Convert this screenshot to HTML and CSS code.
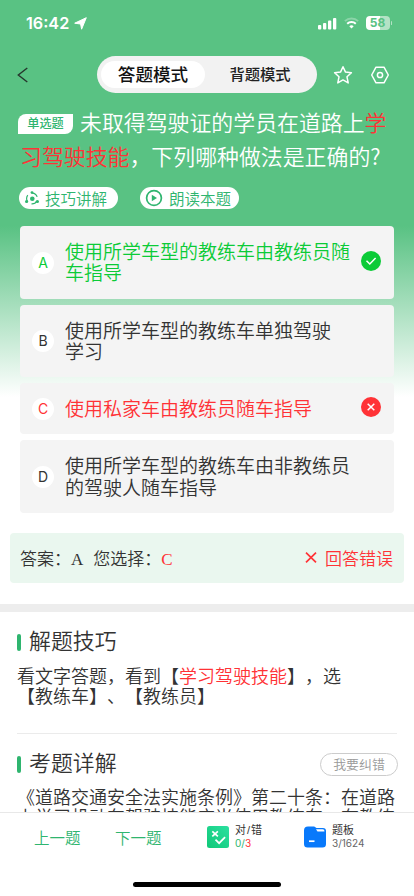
FILE: index.html
```html
<!DOCTYPE html>
<html lang="zh-CN">
<head>
    <meta charset="UTF-8">
    <meta name="viewport" content="width=device-width, initial-scale=1.0">
    <title>答题模式</title>
    <link rel="stylesheet" href="styles.css">
</head>
<body>
    <div class="app">
        <div class="status-bar">
            <span class="time">16:42</span>
            <svg class="location" width="13" height="13" viewBox="0 0 13 13"><path d="M12.3 .7 7.6 12.2 6.6 7 .7 6.2z" fill="#fff" stroke="#fff" stroke-linejoin="round"/></svg>
            <div class="status-right">
                <svg width="19" height="13" viewBox="0 0 19 13" fill="#fff">
                    <rect x="0" y="8" width="3.3" height="4.5" rx="1"/>
                    <rect x="5" y="6" width="3.3" height="6.5" rx="1"/>
                    <rect x="10" y="3.5" width="3.3" height="9" rx="1"/>
                    <rect x="15" y="1" width="3.3" height="11.5" rx="1"/>
                </svg>
                <svg class="wifi" width="15" height="12" viewBox="0 0 15 12" fill="none" stroke="#fff" stroke-width="2">
                    <path d="M.9 4.1a9.4 9.4 0 0 1 13.2 0" opacity=".3"/>
                    <path d="M3.2 6.7a6.1 6.1 0 0 1 8.6 0"/>
                    <path d="M7.5 11.6 5.3 9.3a3.2 3.2 0 0 1 4.4 0z" fill="#fff" stroke="none"/>
                </svg>
                <span class="battery">58</span>
                <span class="battery-tip"></span>
            </div>
        </div>

        <header class="nav">
            <svg class="back" width="12" height="16" viewBox="0 0 12 16" fill="none" stroke="#26352c" stroke-width="1.4"><path d="M10.3 1 1.3 8l9 7"/></svg>
            <div class="tabs">
                <span class="tab active">答题模式</span>
                <span class="tab">背题模式</span>
            </div>
            <svg class="star" width="20" height="20" viewBox="0 0 20 20" fill="none" stroke="#fff" stroke-width="1.5" stroke-linejoin="round"><path d="m10 1.7 2.5 5.4 5.9.7-4.4 4 1.2 6.1-5.2-3-5.2 3L6 11.8l-4.4-4 5.9-.7z"/></svg>
            <svg class="setting" width="20" height="20" viewBox="0 0 20 20" fill="none" stroke="#fff" stroke-width="1.5" stroke-linejoin="round"><path d="M6 2.2h8l4.3 7.8-4.3 7.8H6L1.7 10z"/><circle cx="10" cy="10" r="2.6"/></svg>
        </header>

        <section class="question">
            <p class="question-text"><span class="tag">单选题</span>未取得驾驶证的学员在道路上<em>学<br>习驾驶技能</em>，下列哪种做法是正确的<span class="mark-q">?</span></p>
            <div class="tools">
                <span class="tool">
                    <svg width="16" height="16" viewBox="0 0 16 16" fill="#2fb56f">
                        <circle cx="8" cy="8.5" r="5.4" fill="none" stroke="#2fb56f" stroke-width="1.2" stroke-dasharray="6.3 5" stroke-dashoffset="-2.5"/>
                        <circle cx="8.3" cy="8.7" r="2.3"/>
                        <circle cx="8" cy="2.6" r="1.4"/>
                        <circle cx="2.6" cy="11.5" r="1.6"/>
                        <circle cx="13.4" cy="11.5" r="1.6"/>
                    </svg>
                    技巧讲解
                </span>
                <span class="tool read">
                    <svg width="18" height="18" viewBox="0 0 18 18"><circle cx="9" cy="9" r="7.4" fill="none" stroke="#2fb56f" stroke-width="1.7"/><path d="m6.8 5.8 5.2 3.2-5.2 3.2z" fill="#2fb56f"/></svg>
                    朗读本题
                </span>
            </div>
        </section>

        <ul class="options">
            <li class="option right">
                <span class="letter">A</span>
                <span class="text">使用所学车型的教练车由教练员随<br>车指导</span>
                <span class="mark"><svg width="12" height="10" viewBox="0 0 12 10" fill="none" stroke="#fff" stroke-width="1.5"><path d="m1.5 4.8 3.3 3.2 5.8-6"/></svg></span>
            </li>
            <li class="option">
                <span class="letter">B</span>
                <span class="text">使用所学车型的教练车单独驾驶<br>学习</span>
            </li>
            <li class="option wrong">
                <span class="letter">C</span>
                <span class="text">使用私家车由教练员随车指导</span>
                <span class="mark"><svg width="8" height="8" viewBox="0 0 8 8" fill="none" stroke="#fff" stroke-width="1.5"><path d="m.7.7 6.6 6.6M7.3.7.7 7.3"/></svg></span>
            </li>
            <li class="option">
                <span class="letter">D</span>
                <span class="text">使用所学车型的教练车由非教练员<br>的驾驶人随车指导</span>
            </li>
        </ul>

        <div class="answer">
            <span>答案：<b>A</b></span>
            <span class="chosen">您选择：<b class="red">C</b></span>
            <span class="result">
                <svg width="12" height="11" viewBox="0 0 12 11" fill="none" stroke="#ff3236" stroke-width="1.7"><path d="m1 .7 10 9.6M11 .7 1 10.3"/></svg>
                回答错误
            </span>
        </div>

        <section class="block skill">
            <h2>解题技巧</h2>
            <p>看文字答题，看到【<em>学习驾驶技能</em>】，选<br>【教练车】、【教练员】</p>
        </section>

        <section class="block detail">
            <div class="block-head">
                <h2>考题详解</h2>
                <span class="report">我要纠错</span>
            </div>
            <p>《道路交通安全法实施条例》第二十条：在道路<br>上学习机动车驾驶技能应当使用教练车，在教练</p>
        </section>

        <footer class="bottom">
            <div class="bottom-row">
                <span class="step">上一题</span>
                <span class="step">下一题</span>
                <div class="stat score">
                    <svg width="22" height="22" viewBox="0 0 22 22" fill="none" stroke="#fff" stroke-width="1.7">
                        <defs><linearGradient id="g" x1="0" y1="1" x2="1" y2="0"><stop stop-color="#10c878"/><stop offset="1" stop-color="#2be0a0"/></linearGradient></defs>
                        <rect width="22" height="22" rx="2.5" fill="url(#g)" stroke="none"/>
                        <path d="m5.3 5.3 5.6 5M10.9 5.3l-5.6 5M8.5 13.7l3.6 3.5 6-6"/>
                    </svg>
                    <div>
                        <strong>对<span class="slash">/</span>错</strong>
                        <small><i>0/</i><em>3</em></small>
                    </div>
                </div>
                <div class="stat board">
                    <svg width="22" height="22" viewBox="0 0 22 22">
                        <path d="M4 .5h6.2L12.5 2H19a3 3 0 0 1 3 3v13a3.5 3.5 0 0 1-3.5 3.5h-15A3.5 3.5 0 0 1 0 18V4.5A4 4 0 0 1 4 .5z" fill="#0879fb"/>
                        <path d="M12 3.3h6.5a2 2 0 0 1 2 2.2h-7z" fill="#fff"/>
                        <path d="M5 15.2h5.500" stroke="#fff" stroke-width="1.7"/>
                    </svg>
                    <div>
                        <strong>题板</strong>
                        <small>3/1624</small>
                    </div>
                </div>
            </div>
            <div class="home-indicator"></div>
        </footer>
    </div>
</body>
</html>
```
FILE: styles.css
```css
:root {
    --green: #59c283;
    --deep-green: #2fb56f;
    --red: #ff3236;
    --text: #333;
}

* {
    box-sizing: border-box;
    margin: 0;
    padding: 0;
}

body {
    font-family: "Liberation Sans", "Noto Sans CJK SC", sans-serif;
    font-weight: 350;
    color: var(--text);
    text-spacing-trim: space-all;
}

em, i {
    font-style: normal;
}

em {
    color: var(--red);
}

svg {
    display: block;
    flex: none;
}

.app {
    display: flex;
    flex-direction: column;
    height: 896px;
    overflow: hidden;
    background: linear-gradient(var(--green) 226px, #fff 397px);
}

/* 状态栏 */
.status-bar {
    display: flex;
    align-items: center;
    flex: none;
    height: 46px;
    padding: 0 22px 0 26px;
    color: #fff;
}

.time {
    font-family: Inter, sans-serif;
    font-size: 16.2px;
    font-weight: 600;
    width: 48px;
}

.status-right {
    display: flex;
    align-items: center;
    margin-left: auto;
}

.wifi {
    margin: 0 7px;
}

.battery {
    width: 24px;
    height: 14px;
    border-radius: 4px;
    background: linear-gradient(90deg, #fff 58%, #b4e2c5 58%);
    color: var(--green);
    font: 700 12px/14px Inter, sans-serif;
    text-align: center;
}

.battery-tip {
    width: 1.5px;
    height: 4px;
    margin-left: 1px;
    border-radius: 1px;
    background: #b4e2c5;
}

/* 顶部导航 */
.nav {
    display: flex;
    align-items: center;
    flex: none;
    height: 37px;
    margin-top: 10px;
    padding-left: 17px;
}

.tabs {
    display: flex;
    align-items: center;
    width: 220px;
    height: 37px;
    margin: 0 16px 0 68px;
    padding-left: 4px;
    border-radius: 19px;
    background: #f2f2f2;
}

.tab {
    width: 110px;
    padding-top: 1px;
    font-size: 15.3px;
    font-weight: 500;
    line-height: 26px;
    text-align: center;
    color: #222;
}

.tab.active {
    width: 104px;
    border-radius: 14px;
    background: #fff;
    font-size: 17.6px;
    color: #111;
}

.setting {
    margin-left: 17px;
}

/* 题目 */
.question {
    flex: none;
    padding: 14px 0 0 18px;
}

.question-text {
    height: 68px;
    font-size: 21.9px;
    line-height: 34px;
    color: #fff;
    white-space: nowrap;
    padding-left: 2px;
}

.mark-q {
    font-family: "Noto Sans CJK SC", sans-serif;
    line-height: 1;
}

.tag {
    display: inline-block;
    width: 55px;
    height: 20px;
    margin: 0 7px 0 -2px;
    border-radius: 8px 0 8px 0;
    background: #fff;
    color: var(--deep-green);
    font-size: 12.2px;
    font-weight: 500;
    line-height: 20px;
    text-align: center;
    vertical-align: 3px;
}

.tools {
    display: flex;
    gap: 22px;
    margin-top: 12px;
    padding-left: 1px;
}

.tool {
    display: flex;
    align-items: center;
    gap: 5px;
    width: 99px;
    height: 22px;
    padding-left: 5px;
    border-radius: 11px;
    background: #fff;
    color: var(--deep-green);
    font-size: 15.5px;
}

.tool.read {
    gap: 6px;
}

/* 选项 */
.options {
    display: flex;
    flex-direction: column;
    flex: none;
    gap: 6px;
    margin: 17px 20px 0;
    list-style: none;
}

.option {
    display: flex;
    align-items: center;
    padding: 16px 13px 14px 12px;
    border-radius: 4px;
    background: #f4f4f4;
}

.letter {
    flex: none;
    width: 22px;
    height: 22px;
    margin: -1px 11px 0 0;
    border-radius: 50%;
    background: #fff;
    font-family: Inter, sans-serif;
    font-size: 14px;
    font-weight: 400;
    line-height: 22px;
    text-align: center;
}

.text {
    font-size: 19px;
    line-height: 21.3px;
    white-space: nowrap;
}

.mark {
    display: flex;
    align-items: center;
    justify-content: center;
    width: 20px;
    height: 20px;
    margin: -5px 0 0 auto;
    border-radius: 50%;
}

.right {
    color: #0bcb37;
}

.right .mark {
    background: #0bcb37;
}

.wrong {
    color: var(--red);
}

.wrong .mark {
    background: var(--red);
}

/* 答案 */
.answer {
    display: flex;
    align-items: center;
    flex: none;
    height: 50px;
    margin: 20px 10px 0;
    padding: 0 11px 1px 10px;
    border-radius: 4px;
    background: #eaf7ef;
    font-size: 17px;
}

.answer b {
    font-family: "Liberation Serif", serif;
    font-weight: 400;
}

.chosen {
    margin-left: 10px;
}

.red {
    color: var(--red);
}

.result {
    display: flex;
    align-items: center;
    gap: 8px;
    margin-left: auto;
    color: var(--red);
}

/* 解析 */
.block {
    padding: 0 17px;
}

.block h2 {
    display: flex;
    align-items: center;
    gap: 8px;
    font-size: 21.9px;
    font-weight: 350;
    line-height: 30px;
}

.block h2::before {
    content: "";
    width: 4px;
    height: 17px;
    border-radius: 2px;
    background: var(--deep-green);
}

.block p {
    font-size: 18px;
    line-height: 20px;
    white-space: nowrap;
}

.skill {
    flex: none;
    height: 129px;
    margin-top: 21px;
    padding-top: 15px;
    border-top: 8px solid #ededed;
}

.skill p {
    margin-top: 10px;
}

.detail {
    flex: 1;
    min-height: 0;
    overflow: hidden;
}

.block-head {
    display: flex;
    align-items: center;
    justify-content: space-between;
    height: 61px;
    border-top: 1px solid #ebebeb;
}

.report {
    width: 78px;
    height: 23px;
    margin-right: -1px;
    border: 1px solid #ccc;
    border-radius: 12px;
    color: #999;
    font-size: 12.9px;
    line-height: 21px;
    text-align: center;
}

.detail p {
    margin-top: -6px;
}

/* 底部 */
.bottom {
    flex: none;
    height: 84px;
    border-top: 1px solid #e8e8e8;
    background: #fff;
}

.bottom-row {
    display: flex;
    align-items: center;
    height: 48px;
    padding-left: 34px;
}

.step {
    width: 81px;
    color: var(--deep-green);
    font-size: 15.5px;
}

.stat {
    display: flex;
    align-items: center;
    gap: 6px;
}

.score {
    width: 97px;
    margin-left: 11px;
}

.stat strong,
.stat small {
    display: block;
    line-height: 13px;
}

.stat strong {
    font-size: 11px;
    font-weight: 400;
}

.slash {
    margin: 0 1px;
}

.stat small {
    font-family: Inter, sans-serif;
    font-size: 10px;
    font-weight: 400;
    color: #666;
}

.stat i {
    color: var(--deep-green);
}

.home-indicator {
    width: 148px;
    height: 5px;
    margin: 21px auto 0;
    border-radius: 3px;
    background: #000;
}
```
